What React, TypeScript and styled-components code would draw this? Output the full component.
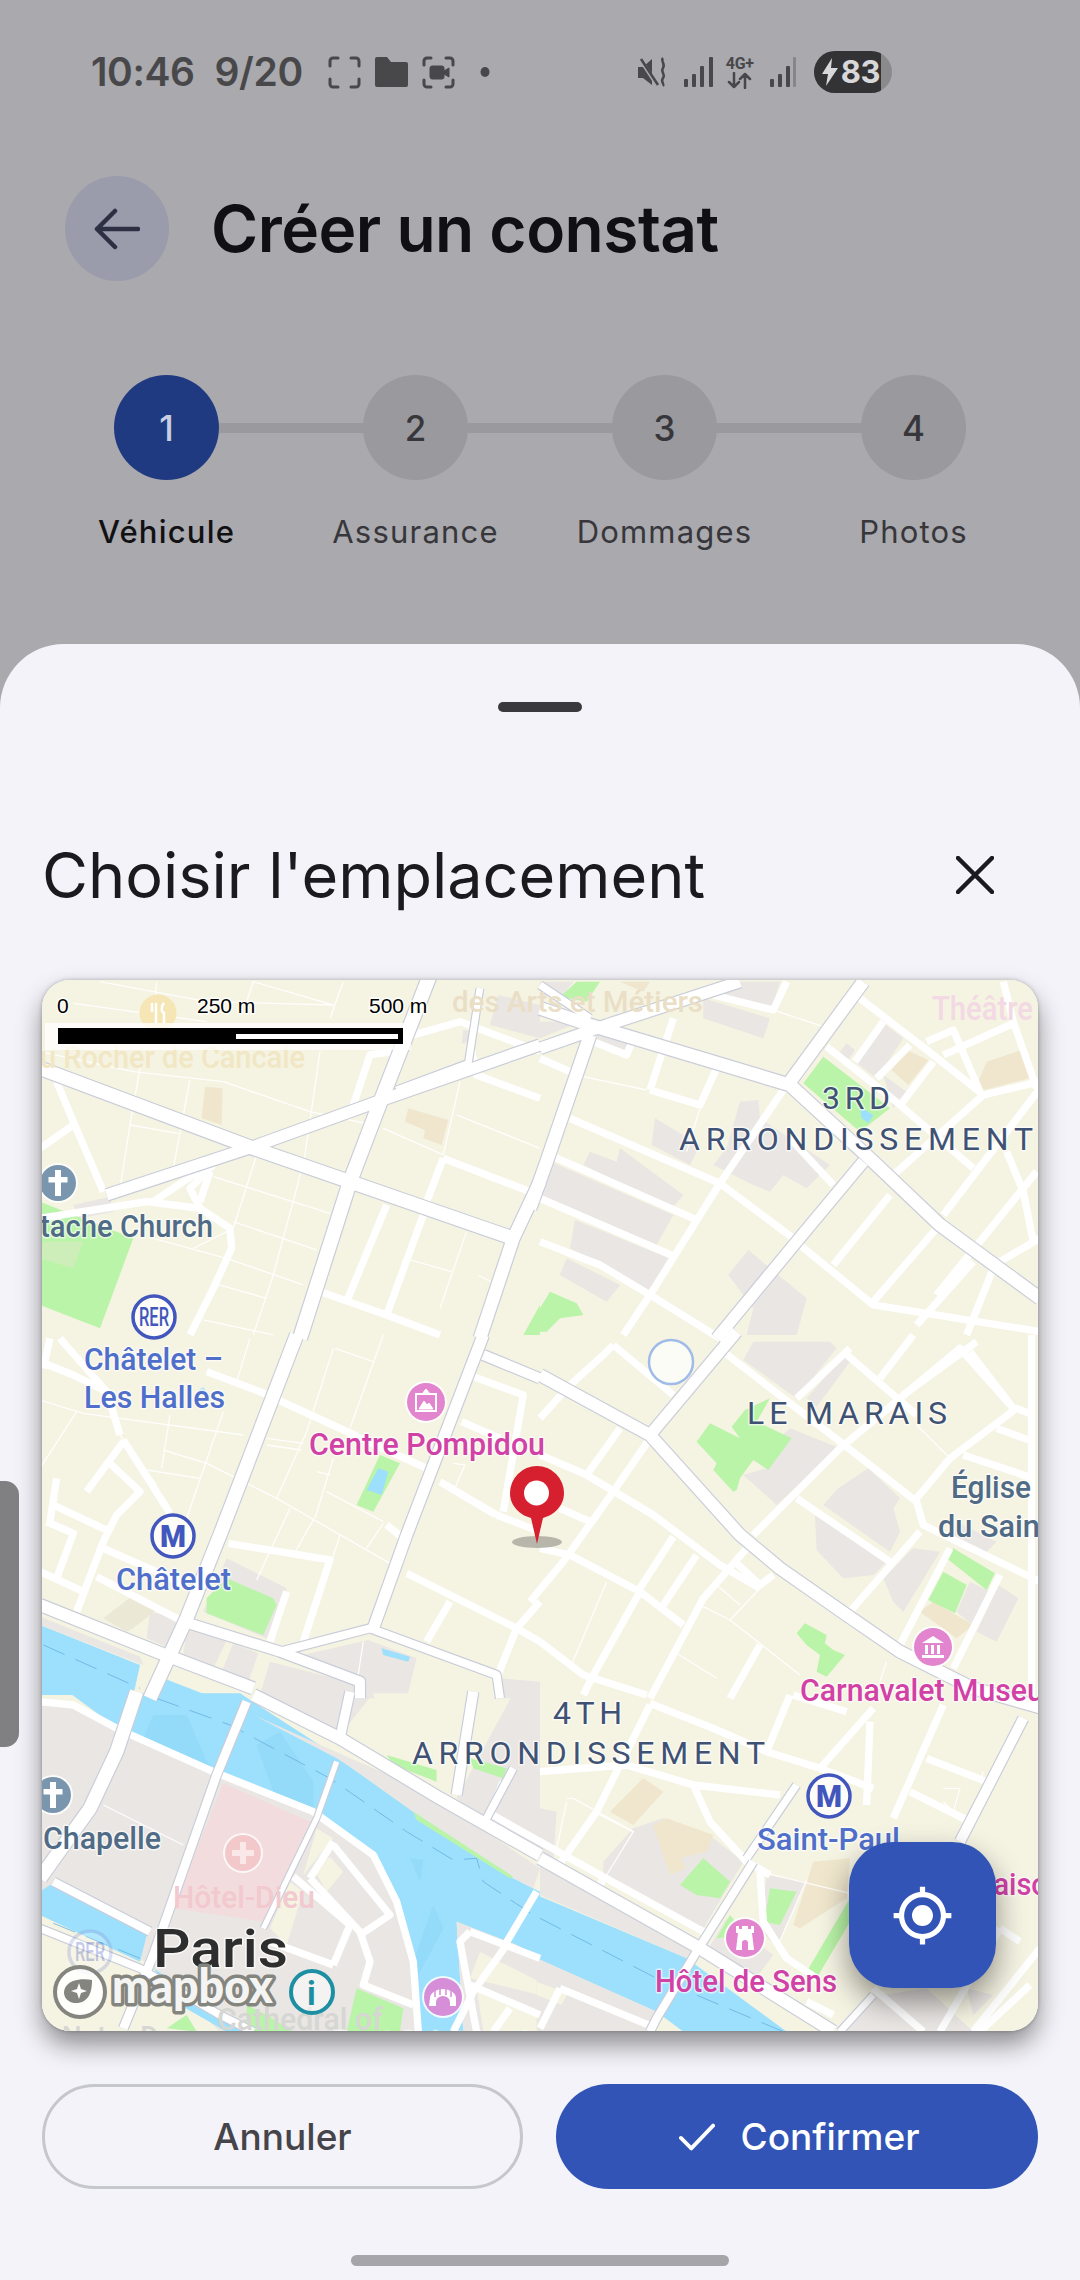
import React from "react";
import styled, { createGlobalStyle } from "styled-components";

const Global = createGlobalStyle`
  html, body { margin: 0; padding: 0; background: #a9a9ae; }
  * { box-sizing: border-box; }
  body { font-family: Inter, "Noto Sans", sans-serif; }
`;

const Screen = styled.div`
  position: relative; width: 1080px; height: 2280px; overflow: hidden;
  background: #a9a9ae; display: flex; flex-direction: column;
`;
const Backdrop = styled.div`height: 644px; flex: none; display: flex; flex-direction: column;`;
const StatusBar = styled.div`
  display: flex; align-items: center; height: 42px; margin-top: 51px; padding-left: 91px; color: #47474a;
`;
const StatusText = styled.span<{ $ml?: number }>`
  font: 600 39px/42px Inter, sans-serif; letter-spacing: -0.4px; margin-left: ${p => p.$ml ?? 0}px; color: #48484b;
`;
const StatusIcon = styled.svg<{ $ml: number }>`margin-left: ${p => p.$ml}px; flex: none; display: block;`;
const FourG = styled.div<{ $ml: number }>`
  margin-left: ${p => p.$ml}px; width: 32px; display: flex; flex-direction: column; align-items: center;
`;
const FourGText = styled.span`font: 700 16px/16px "Roboto", sans-serif; color: #48484b; letter-spacing: -.3px;`;
const Battery = styled.div`
  margin-left: 18px; width: 78px; height: 42px; border-radius: 21px; overflow: hidden;
  display: flex; align-items: center; background: #8a8a8d;
`;
const BatteryFill = styled.div`
  width: 67px; height: 42px; background: #333335; display: flex; align-items: center; padding-left: 8px; gap: 3px; flex: none;
`;
const BatteryText = styled.span`font: 700 31px/42px Inter, sans-serif; color: #d8d8da; letter-spacing: -.5px;`;

const AppBar = styled.div`display: flex; align-items: center; margin: 83px 0 0 65px; height: 105px;`;
const BackBtn = styled.div`
  width: 104px; height: 105px; border-radius: 50%; background: #9a9bab;
  display: flex; align-items: center; justify-content: center;
`;
const PageTitle = styled.h1`
  margin: 0 0 0 42px; font: 600 64px/70px Inter, sans-serif; color: #101014; letter-spacing: -.5px;
`;
const StepTrack = styled.div`display: flex; align-items: center; margin: 94px 114px 0 114px;`;
const StepDot = styled.div<{ $active?: boolean }>`
  width: 105px; height: 105px; flex: none; border-radius: 50%;
  background: ${p => (p.$active ? "#1f3a80" : "#99999e")};
  color: ${p => (p.$active ? "#c9cfe0" : "#37373b")};
  display: flex; align-items: center; justify-content: center;
  font: 500 35px/40px Inter, sans-serif;
`;
const StepLine = styled.div`flex: 1; height: 10px; background: #99999e;`;
const StepLabels = styled.div`
  display: grid; grid-template-columns: repeat(4, 249px); margin: 32px 0 0 42px;
`;
const StepLabel = styled.span<{ $active?: boolean }>`
  text-align: center; font: ${p => (p.$active ? 500 : 400)} 31px/40px Inter, sans-serif; letter-spacing: 1.2px;
  color: ${p => (p.$active ? "#111114" : "#37373b")};
`;

const Sheet = styled.div`
  flex: 1; background: #f3f3f9; border-radius: 64px 64px 0 0; padding: 58px 42px 0;
  display: flex; flex-direction: column;
`;
const Grip = styled.div`
  width: 84px; height: 10px; border-radius: 5px; background: #3a3a3e; align-self: center; flex: none;
`;
const SheetHeader = styled.div`
  margin-top: 113px; height: 100px; display: flex; align-items: center; justify-content: space-between; flex: none;
`;
const SheetTitle = styled.h2`
  margin: 0; font: 400 63px/100px Inter, sans-serif; color: #1b1b1f; letter-spacing: 0;
`;
const CloseBtn = styled.div`width: 100px; height: 100px; margin-right: 13px; display: flex; align-items: center; justify-content: center;`;
const MapFrame = styled.div`
  position: relative; margin-top: 55px; width: 996px; height: 1051px; flex: none; border-radius: 28px;
  box-shadow: 0 14px 26px rgba(0,0,0,.42), 0 0 4px rgba(0,0,0,.25);
`;
const MapClip = styled.div`
  width: 100%; height: 100%; border-radius: 28px; overflow: hidden; background: #f5f3e2;
`;
const MapArt = styled.svg`display: block; width: 996px; height: 1051px;`;
const MapLabel = styled.text<{ $size: number; $color: string; $weight?: number; $sp?: number; $halo?: string }>`
  font-family: Roboto, "Noto Sans", sans-serif;
  font-size: ${p => p.$size}px; font-weight: ${p => p.$weight ?? 500}; fill: ${p => p.$color};
  letter-spacing: ${p => p.$sp ?? 0}px;
  paint-order: stroke; stroke: ${p => p.$halo ?? "rgba(255,255,255,.65)"}; stroke-width: 3px; stroke-linejoin: round;
`;
const ScaleText = styled.text`
  font-family: "Liberation Sans", sans-serif; font-size: 21px; fill: #000;
  paint-order: stroke; stroke: rgba(255,255,255,.85); stroke-width: 3px;
`;
const LogoText = styled.text`
  font-family: Lato, "Noto Sans", sans-serif; font-weight: 900; font-size: 47px; fill: #f4f4f2;
  paint-order: stroke; stroke: #85857f; stroke-width: 7px; stroke-linejoin: round;
`;
const Fab = styled.button`
  position: absolute; left: 807px; top: 862px; width: 147px; height: 146px; border: 0; border-radius: 44px;
  background: #3154b6; box-shadow: 0 14px 30px rgba(0,0,0,.42);
  display: flex; align-items: center; justify-content: center; padding: 0;
`;
const Actions = styled.div`display: grid; grid-template-columns: 481px 482px; gap: 33px; margin-top: 53px; flex: none;`;
const OutlineBtn = styled.button`
  height: 105px; border-radius: 53px; border: 3.5px solid #c6c6cd; background: transparent;
  font: 500 37px/40px Inter, sans-serif; color: #44444a;
`;
const SolidBtn = styled.button`
  height: 105px; border-radius: 53px; border: 0; background: #3154b6; color: #fff;
  font: 500 37px/40px Inter, sans-serif; display: flex; align-items: center; justify-content: center; gap: 26px; padding-left: 10px;
`;
const HomeBar = styled.div`
  width: 378px; height: 11px; border-radius: 6px; background: #a5a5aa; margin-top: 66px; align-self: center; flex: none;
`;
const SideTab = styled.div`
  position: absolute; left: 0; top: 1481px; width: 19px; height: 266px; background: #808082; border-radius: 0 14px 14px 0;
`;

type Quad = { at: [number, number]; fills: [string, string][]; thin: string[]; mid: string[]; major: [string, number][]; };
const G = "#e9e6e3", T = "#efe6cd", GR = "#b9f4a8", B = "#9ce0fd", BD = "#94daf9", C = "#f5f3e2";

const quads: Quad[] = [
  { at: [40, 975],
    fills: [
      ["0,680 100,720 280,790 180,1060 0,990", GR], ["10,800 130,800 100,880 0,850", "#cdeeb9"],
      ["100,690 210,665 220,710 120,730", G], ["495,335 548,340 545,450 485,430", T],
      ["1105,400 1225,435 1205,510 1150,490 1155,465 1095,440", T], ["1375,60 1500,90 1500,190 1350,150", G],
      ["1270,165 1305,170 1295,205 1265,205", G], ["1450,1080 1500,990 1500,1080", GR],
    ],
    thin: ["180,20 500,80 880,90", "100,85 500,140", "640,20 880,90", "910,20 870,130", "350,20 340,130", "640,20 620,80",
      "0,230 280,290 550,320 810,410 1000,450", "840,230 795,540 770,640 700,900 640,1080", "300,280 270,450 240,640", "450,315 400,580",
      "270,450 415,475", "1260,320 1210,540", "1030,460 1210,540", "1250,420 1500,520", "650,540 580,760 460,820", "520,605 870,715",
      "580,740 830,825", "340,790 560,850 790,930", "520,925 680,970", "490,1035 700,1080", "1280,770 1200,1000", "1110,855 1235,890", "1315,900 1370,930"],
    mid: ["50,320 100,440 190,650", "100,450 0,520", "0,730 320,680 480,700 570,760 575,820 520,940 450,1080", "480,700 450,640 520,570", "340,680 490,580",
      "480,680 510,590", "1060,230 990,240 940,390", "1040,690 920,980", "1150,720 1040,1020", "840,950 1040,1020 1200,1080", "1210,550 1160,680",
      "1210,550 1470,650", "1500,370 1310,300 1290,200", "1120,180 1260,140 1500,230"],
    major: [["1170,0 1010,410 930,620 780,1090", 42], ["0,280 640,520 1420,790", 40], ["200,660 640,515 1040,370 1500,210", 34], ["1320,40 1285,265 1070,345", 20], ["1500,620 1420,790 1320,1090", 38]],
  },
  { at: [540, 975],
    fills: [
      ["0,20 100,20 60,70 0,60", G], ["0,140 120,140 0,190", G], ["170,170 290,190 270,230 240,220 170,200", G], ["490,70 690,130 670,190 490,130", G],
      ["530,20 720,20 695,100 530,60", G], ["1025,140 1090,190 1010,310 945,260", G], ["920,205 945,225 925,255 900,230", G],
      ["1100,225 1165,255 1105,330 1055,285", T], ["1030,300 1100,350 1060,400", G], ["1340,260 1445,225 1470,310 1330,345 1315,320", T],
      ["20,555 400,720 350,810 5,660", G], ["240,520 430,660 395,700 130,570 150,530 230,560", G], ["105,735 400,855 330,950 90,820", G], ["80,850 240,930 200,980 60,900", G],
      ["345,430 480,510 450,570 335,510", G], ["600,380 655,375 660,430 870,570 800,640 730,600 690,650 640,630 520,570 560,520", G], ["625,825 690,880 800,970 770,1080 620,1080 640,1000 565,900", G],
      ["60,65 110,20 180,20 140,80", GR], ["850,245 1050,400 960,470 790,325", GR], ["960,395 1000,420 985,445 965,430", B], ["30,950 110,985 130,1020 60,1030 20,1070 0,1070 0,1000", GR], ["240,20 330,20 310,50", T],
    ],
    thin: ["130,305 320,345", "700,105 850,155", "480,400 440,530", "1190,255 1320,360", "1260,200 1310,340"],
    mid: ["520,60 700,105 740,20", "330,345 480,390 530,280", "330,345 400,130", "160,200 260,240 280,190", "0,250 90,290", "90,430 540,625 760,790", "40,545 470,735", "0,670 405,845",
      "0,800 180,870 330,960 540,1090", "540,625 330,960 250,1080", "740,330 540,625", "960,70 1180,240 1330,360", "860,215 1080,390 1300,580", "1030,140 945,260", "1110,210 1010,310", "1180,260 1085,385",
      "1160,200 1240,165 1320,350", "1210,240 1420,145", "1390,20 1420,140 1490,340", "1330,360 1500,320", "1330,360 1060,600", "1500,340 1210,720", "1400,530 1450,650 1480,800", "1490,590 1190,960",
      "780,810 1000,990 1500,1070", "1050,660 880,870", "1190,760 1000,980", "1300,860 1130,1050", "1360,880 1280,1080", "1380,860 1500,790", "750,490 880,630"],
    major: [["0,100 150,150 750,330 1000,560 1200,750 1500,970", 38], ["970,20 750,320", 38], ["970,560 770,800 530,1090", 34], ["0,220 200,150 600,20", 34], ["150,180 20,560 -30,700", 38], ["0,30 150,130", 22]],
  },
  { at: [40, 1335],
    fills: [
      ["0,870 300,990 280,1080 0,1080", B], ["370,1030 500,1080 350,1080", B], ["330,830 420,850 380,935 320,910", G], ["440,880 560,915 520,1000 430,960", G], ["580,925 655,955 625,1040 545,1010", G],
      ["690,980 960,1050 950,1080 660,1080", G], ["0,845 300,965 310,990 0,870", G], ["790,960 985,915 1130,970 1100,1090 950,1090", G], ["1380,1030 1500,1040 1500,1090 1370,1090", G], ["560,670 740,760 680,910 490,830", G],
      ["560,730 700,790 710,810 670,900 500,835 500,790", GR], ["190,850 280,780 355,820 280,880 260,890", "#ebe9d6"], ["950,510 1020,360 1080,385 1000,530", GR], ["980,465 1015,400 1045,410 1025,480", B],
      ["1025,940 1110,965 1105,980 1030,960", B], ["470,170 490,155 510,185", "#bfe6f5"],
    ],
    thin: ["0,195 130,235 610,300", "680,310 790,325", "680,330 785,345", "370,345 500,385 710,490 1050,685", "240,300 350,450", "320,405 480,430", "390,240 365,400", "550,230 440,550", "630,10 590,140", "880,40 800,290 710,490",
      "1030,0 930,280", "885,40 1000,80", "750,520 650,735", "820,555 760,660", "900,600 800,910", "860,470 1030,560", "830,410 870,420", "880,370 825,550", "1030,565 980,640", "1200,450 1350,540", "1240,385 1275,390 1240,470", "0,400 110,230", "970,920 950,1050"],
    mid: ["0,80 100,120 220,180", "500,110 660,170 900,280 1160,400", "250,315 390,535", "250,320 140,470", "210,385 300,470 230,540 190,620 110,830", "50,430 30,560", "40,510 210,590", "20,560 100,595 50,730", "0,710 130,770",
      "190,640 440,750", "170,725 430,860", "565,625 870,675 790,920", "740,770 690,920", "1040,570 1090,610", "1100,715 1430,880 1500,920", "1230,800 1160,920", "1265,260 1380,310", "1300,125 1450,180 1390,530", "1200,440 1370,540", "1370,540 1500,590", "1500,800 1430,880 1370,1030", "30,10 10,100", "60,10 200,170 240,300"],
    major: [["770,0 540,600 440,850 330,1090", 40], ["1330,0 1100,600 1000,880", 34], ["1330,60 1500,130", 30], ["0,810 350,950 640,1060", 36], ["430,860 720,950 960,1040 960,1090", 30], ["720,950 990,880 1370,1020 1380,1090", 24]],
  },
  { at: [540, 1335],
    fills: [
      ["640,20 870,20 890,40 770,190 610,75", G], ["750,280 900,340 710,510 610,420 680,400 640,375", G], ["850,510 895,460 985,400 1080,490 1060,520 1080,590 1050,650", G], ["830,645 825,540 1040,680 1000,720 910,730", G],
      ["1030,730 1120,640 1200,650 1090,830 1060,800", G], ["1250,560 1370,620 1330,660 1240,610", G], ["1140,830 1180,800 1300,870 1250,910", T], ["1250,830 1290,740 1350,770 1310,880", G], ["1310,890 1375,750 1435,790 1370,920", G], ["800,190 915,60 930,80 830,215", G],
      ["470,320 510,265 600,310 575,275 615,225 690,190 650,260 755,310 685,405 640,375 600,430 590,465 580,470 520,405 530,385", GR],
      ["1220,670 1240,640 1365,715 1340,765", GR], ["1165,795 1210,710 1280,750 1245,835", GR], ["770,895 795,865 860,900 855,925 880,945 915,960 860,1025 830,1010 840,960 800,930", GR],
    ],
    thin: ["530,750 600,810", "570,855 660,760", "490,815 570,855 780,1020", "410,955 530,1030", "200,740 90,1000", "1230,370 1130,490", "1130,270 1230,370", "1040,980 1020,1040"],
    mid: ["220,30 400,180", "220,30 190,60 90,150 0,250", "0,360 140,420 340,540 540,690 660,760", "240,280 140,420", "330,310 220,470 70,680 -30,800", "0,640 90,660 300,770 430,870", "400,605 300,760", "470,660 370,810", "620,640 490,790 330,1090", "585,680 660,750 700,720",
      "300,770 160,1020 130,1080", "0,920 130,1020 320,1080", "660,930 570,1090", "640,600 900,340 1260,40 1420,220", "770,190 930,40", "910,50 1130,240", "550,50 900,320 1130,500 1150,570 1500,740", "770,490 1050,680", "930,830 1140,590", "1080,930 1230,640", "1240,1000 1380,720",
      "1020,130 1120,0", "1090,180 1310,20", "1230,370 1430,220 1480,240", "1290,50 1420,220", "1370,280 1480,320", "1270,360 1480,430", "1475,0 1475,1090", "60,520 150,560", "1130,490 1230,370"],
    major: [["590,-10 330,300", 34], ["0,120 330,300 600,600 720,700 920,840 1080,950 1300,1060 1510,1120", 36]],
  },
  { at: [40, 1695],
    fills: [
      ["0,30 100,30 240,105 520,230 820,350 1000,480 1070,620 1120,800 1140,1010 540,1010 330,810 0,620", G],
      ["90,-5 600,-5 900,190 930,215 1120,350 1420,550 1500,590 1500,790 1430,750 1250,680 1270,1010 1145,1010 1120,800 1070,620 1000,480 820,350 520,230 240,105", B],
      ["310,130 340,60 440,60 500,200 520,220", BD], ["650,150 720,110 820,260 820,340 700,290", BD], ["1120,800 1180,630 1210,700 1130,850", BD], ["1110,490 1150,495 1140,560", BD],
      ["0,590 30,570 320,720 300,800 0,660", B], ["340,820 550,960 640,1010 560,1010 420,930", B],
      ["640,-5 1000,-5 900,120", G], ["1000,-5 1300,-5 1200,260 1040,180", C], ["1250,310 1420,-5 1500,-5 1500,480 1330,380", G], ["640,60 890,190 930,215 1120,350 1420,550 1480,580 1500,520 1160,290 930,190", G],
      ["550,265 810,380 670,680 400,640", "#f3dcdd"], ["820,520 870,485 910,530 860,590", C], ["830,400 880,430 790,540", C], ["750,560 790,590 740,750 690,700", C],
      ["0,740 300,850 230,1010 0,1010", C], ["380,1000 440,960 470,1010", GR], ["620,930 680,960 760,1010 620,1010", GR], ["950,880 1090,940 1080,1010 920,1010", GR],
      ["1250,680 1430,750 1500,790 1500,1010 1270,1010", G], ["1320,770 1500,860 1500,900 1290,850", C], ["1310,880 1500,960 1500,1010 1330,1010", C],
      ["1120,350 1420,545 1410,550 1130,375", GR], ["1040,180 1190,225 1190,260 1060,210", GR], ["1290,190 1400,220 1390,250 1300,220", GR],
    ],
    thin: ["190,330 430,450"],
    mid: ["0,20 100,30 240,105 520,230 820,350 1000,480 1070,620 1120,800 1135,1010", "880,440 810,550", "810,550 960,710 990,800 970,870 1120,930", "880,450 1050,660 960,720", "760,545 930,690 880,810", "690,740 880,810",
      "1290,710 1500,790", "1290,710 1260,740 1310,1010", "1400,750 1300,890 1240,1010", "1290,870 1500,960", "1340,350 1500,440", "1390,260 1340,380", "1410,940 1360,1010", "1490,590 1395,750"],
    major: [["290,-10 230,170 150,340 0,550", 40], ["640,0 900,130 1200,310 1500,480", 36], ["620,20 530,240 340,780 250,1000", 26], ["930,-10 900,130", 28], ["890,200 830,370 670,700", 16], ["1300,-10 1250,300", 30], ["1420,220 1340,370", 22], ["40,560 330,710", 24], ["0,700 300,820 540,960 640,1010", 22]],
  },
  { at: [540, 1695],
    fills: [
      ["0,510 480,740 440,790 0,600", G], ["0,340 50,350 40,500 0,480", G], ["190,500 280,400 370,370 520,430 610,500 490,700 190,550", G], ["210,350 310,250 370,290 280,390", T], ["340,390 380,370 520,420 500,470 420,490 440,520 390,540", T],
      ["820,500 930,490 920,610 780,700 760,690", T], ["680,540 800,560 710,760 660,700", G], ["500,770 560,670 700,780 640,860", G],
      ["420,570 490,490 570,560 540,610 470,600", GR], ["680,640 690,580 770,590 720,690 670,680", GR], ["530,730 570,660 620,720", GR], ["800,830 930,610 930,680 830,850", GR],
      ["-10,600 440,790 740,1010 430,1010 350,950 -10,790", B], ["-10,790 350,950 330,1010 -10,1010", G], ["-10,860 110,905 90,940 -10,900", C], ["60,940 100,860 350,960 330,1010 100,1010", G], ["910,1010 1010,880 1130,1010", G], ["1030,900 1160,880 1300,1010 1060,1010", G], ["1280,880 1360,900 1300,960", G],
    ],
    thin: ["80,320 50,460", "80,310 100,310 280,410 200,540", "160,350 280,410", "680,535 930,595", "800,555 710,760", "1210,280 1260,280 1240,350 1210,320", "1330,230 1320,260", "0,430 190,550"],
    mid: ["0,230 260,210 460,270 720,300", "460,270 510,380 620,500 690,540", "680,170 840,220 1000,280", "330,25 520,100 680,170", "330,30 280,130 170,350 50,520", "750,0 680,170", "1000,40 840,220", "920,50 760,0", "990,80 980,330", "1210,30 1060,370",
      "1160,190 1340,260", "1110,290 1290,380", "660,530 670,680 740,790 830,850", "0,440 180,540 490,710", "190,550 170,590", "60,880 350,1000", "60,880 0,1000", "800,920 880,960", "1000,880 1150,1010", "1300,1010 1500,760", "1380,700 1440,740", "1200,1010 1380,700", "1320,1010 1470,870"],
    major: [["0,490 480,760 880,1010", 36], ["620,490 770,270", 22], ["640,500 470,770 350,970 330,1010", 24], ["1450,70 1260,440", 30], ["1000,900 900,1010", 20]],
  },
];

const DISTRICT = "#3f5274";
const labels: { t: string; x: number; y: number; s: number; c: string; len?: number; w?: number; halo?: string; spaced?: boolean }[] = [
  { t: "des Arts et Métiers", x: 452, y: 1012, s: 30, c: "#eadfc6", len: 251, halo: "none" },
  { t: "Théâtre", x: 932, y: 1020, s: 33, c: "#f3d9e4", len: 101, halo: "none" },
  { t: "u Rocher de Cancale", x: 40, y: 1068, s: 31, c: "#f2e7c4", len: 265, halo: "none" },
  { t: "3RD", x: 822, y: 1109, s: 32, c: DISTRICT, len: 68, w: 400, spaced: true },
  { t: "ARRONDISSEMENT", x: 679, y: 1150, s: 32, c: DISTRICT, len: 354, w: 400, spaced: true },
  { t: "tache Church", x: 40, y: 1237, s: 31, c: "#4f6b85", len: 173 },
  { t: "Châtelet –", x: 84, y: 1370, s: 31, c: "#4f6fcb", len: 139 },
  { t: "Les Halles", x: 84, y: 1408, s: 31, c: "#4f6fcb", len: 141 },
  { t: "Centre Pompidou", x: 309, y: 1455, s: 31, c: "#d141a6", len: 236 },
  { t: "Châtelet", x: 116, y: 1590, s: 31, c: "#4f6fcb", len: 115 },
  { t: "LE MARAIS", x: 747, y: 1424, s: 32, c: DISTRICT, len: 200, w: 400, spaced: true },
  { t: "Église", x: 951, y: 1498, s: 31, c: "#4f6b85", len: 80 },
  { t: "du Saint", x: 938, y: 1537, s: 31, c: "#4f6b85", len: 112 },
  { t: "Carnavalet Museum", x: 800, y: 1701, s: 31, c: "#d141a6", len: 270 },
  { t: "4TH", x: 553, y: 1724, s: 32, c: DISTRICT, len: 69, w: 400, spaced: true },
  { t: "ARRONDISSEMENT", x: 412, y: 1764, s: 32, c: DISTRICT, len: 353, w: 400, spaced: true },
  { t: "Saint-Paul", x: 757, y: 1850, s: 31, c: "#4f6fcb", len: 143 },
  { t: "Chapelle", x: 43, y: 1849, s: 31, c: "#4f6b85", len: 118 },
  { t: "Hôtel-Dieu", x: 173, y: 1908, s: 31, c: "#f2c9cf", len: 142, halo: "none" },
  { t: "Paris", x: 153, y: 1967, s: 54, c: "#2e2e2e", len: 135 },
  { t: "Hôtel de Sens", x: 655, y: 1992, s: 31, c: "#d141a6", len: 182 },
  { t: "Maison", x: 968, y: 1895, s: 31, c: "#d141a6", len: 96 },
  { t: "Cathedral of", x: 217, y: 2030, s: 31, c: "#d6d6d2", len: 166, halo: "none" },
  { t: "Notre-Dame", x: 62, y: 2048, s: 31, c: "#d6d6d2", len: 150, halo: "none" },
  { t: "Pont Saint-Louis", x: 333, y: 2053, s: 31, c: "#d141a6", len: 210 },
];

const Poi = ({ x, y, r, fill, o = 1, children }: { x: number; y: number; r: number; fill: string; o?: number; children?: React.ReactNode }) => (
  <g transform={`translate(${x} ${y})`} opacity={o}>
    <circle r={r + 2} fill="#fff" opacity={0.85} />
    <circle r={r} fill={fill} />
    {children}
  </g>
);
const Cross = () => <path d="M-3-13h6v7h6.5v5.5H3V13h-6V-.5h-6.5V-6H-3z" fill="#fff" />;

const Transit = ({ x, y, text, o = 1 }: { x: number; y: number; text: string; o?: number }) => (
  <g transform={`translate(${x} ${y})`} opacity={o}>
    <circle r={21} fill="#fff" fillOpacity={0.75} stroke={o < 1 ? "#8e9ad8" : "#4257bd"} strokeWidth={3.5} />
    {text === "M"
      ? <MapLabel x={-13} y={11} $size={31} $weight={900} $color="#4257bd" $halo="none" textLength={26} lengthAdjust="spacingAndGlyphs">M</MapLabel>
      : <MapLabel x={-15} y={9} $size={25} $weight={500} $color="#4257bd" $halo="none" textLength={30} lengthAdjust="spacingAndGlyphs">{text}</MapLabel>}
  </g>
);

const MapDrawing = () => (
  <MapArt viewBox="42 980 996 1051">
    <rect x="42" y="980" width="996" height="1051" fill="#f5f3e2" />
    {quads.map((q, i) => (
      <g key={i} transform={`translate(${q.at[0]} ${q.at[1]}) scale(.3333)`}>
        {q.fills.map(([pts, c], j) => <polygon key={j} points={pts} fill={c} />)}
      </g>
    ))}
    <g transform="translate(40 1695) scale(.3333)" fill="none" stroke="#6ab2e0" strokeWidth="2.5">
      <polyline points="350,10 570,90 700,160 870,250 1100,410 1240,495 1310,490 1330,560 1480,660" strokeDasharray="70 35" />
      <polyline points="40,685 300,790" strokeDasharray="70 35" />
    </g>
    <g transform="translate(40 1335) scale(.3333)" fill="none" stroke="#6ab2e0" strokeWidth="2.5">
      <polyline points="10,930 300,1060" strokeDasharray="70 35" />
    </g>
    <g transform="translate(540 1695) scale(.3333)" fill="none" stroke="#6ab2e0" strokeWidth="2.5">
      <polyline points="0,670 350,850 730,1010" strokeDasharray="70 35" />
    </g>
    {quads.map((q, i) => (
      <g key={i} transform={`translate(${q.at[0]} ${q.at[1]}) scale(.3333)`} fill="none" stroke="#fff" strokeLinejoin="round">
        {q.thin.map((pts, j) => <polyline key={j} points={pts} strokeWidth={4} opacity={0.9} />)}
        {q.mid.map((pts, j) => <polyline key={j} points={pts} strokeWidth={22} />)}
      </g>
    ))}
    {quads.map((q, i) => (
      <g key={i} transform={`translate(${q.at[0]} ${q.at[1]}) scale(.3333)`} fill="none" strokeLinejoin="round">
        {q.major.map(([pts, w], j) => <polyline key={j} points={pts} stroke="#c9cdd8" strokeWidth={w + 7} />)}
      </g>
    ))}
    {quads.map((q, i) => (
      <g key={i} transform={`translate(${q.at[0]} ${q.at[1]}) scale(.3333)`} fill="none" stroke="#fff" strokeLinejoin="round">
        {q.major.map(([pts, w], j) => <polyline key={j} points={pts} strokeWidth={w} />)}
      </g>
    ))}

    <g transform="translate(158 1013)">
      <circle r="18.5" fill="#f6e6b5" />
      <path d="M-6-10v9M-2-10v20M6-10c-3 3-3 9 0 10v10" stroke="#fff" strokeWidth="2.5" fill="none" />
    </g>
    <circle cx="671" cy="1362" r="22" fill="#fff" fillOpacity=".7" stroke="#9fbce8" strokeWidth="2.5" />

    {labels.map(l => (
      <MapLabel key={l.t + l.x} x={l.x} y={l.y} $size={l.s} $color={l.c} $weight={l.w} $halo={l.halo} textLength={l.len} lengthAdjust={l.spaced ? "spacing" : "spacingAndGlyphs"}>{l.t}</MapLabel>
    ))}

    <Poi x={58} y={1183} r={18} fill="#7a96ae"><Cross /></Poi>
    <Poi x={53} y={1795} r={18} fill="#7a96ae"><Cross /></Poi>
    <Poi x={243} y={1853} r={18} fill="#f3c6ca" o={0.9}><path d="M-3-11h6v8h8v6H3v8h-6V3h-8v-6h8z" fill="#fbe9ea" /></Poi>
    <Poi x={426} y={1402} r={19} fill="#e285ce">
      <rect x="-10" y="-8" width="20" height="17" fill="none" stroke="#fff" strokeWidth="2" />
      <path d="M-7 7l5-8 3 4 2-2 4 6zM-4-8L0-13l4 5" fill="#fff" stroke="#fff" strokeWidth="1" />
    </Poi>
    <Poi x={933} y={1647} r={19} fill="#e285ce">
      <path d="M-11-4L0-11 11-4zM-11 8h22v3h-22zM-8-2h3v9h-3zM-2-2h3v9h-3zM4-2h3v9H4z" fill="#fff" />
    </Poi>
    <Poi x={745} y={1938} r={19} fill="#e285ce">
      <path d="M-9-12h3v3h3v-3h6v3h3v-3h3v7H-9zM-7-5H7L9 12H3V5a3 3 0 0 0-6 0v7h-6z" fill="#fff" />
    </Poi>
    <Poi x={443} y={1997} r={19} fill="#d68ed8">
      <path d="M-13 1a13 9 0 0 1 26 0v8H7V5a7 6 0 0 0-14 0v4h-7z" fill="#fff" />
      <path d="M-8-6v6M-3-8v6M3-8v6M8-6v6" stroke="#d68ed8" strokeWidth="1.5" />
    </Poi>

    <Transit x={154} y={1317} text="RER" />
    <Transit x={173} y={1536} text="M" />
    <Transit x={829} y={1796} text="M" />
    <Transit x={90} y={1952} text="RER" o={0.3} />

    <ellipse cx="537" cy="1542" rx="25" ry="6" fill="#b8b6ab" />
    <path d="M537 1466a27 27 0 0 1 27 27c0 13-10 22-21 25l-6 26-6-26c-11-3-21-12-21-25a27 27 0 0 1 27-27z" fill="#d6202f" />
    <circle cx="536.500" cy="1493" r="12.500" fill="#fff" />

    <rect x="45" y="1023" width="366" height="27" fill="#fff" fillOpacity=".75" />
    <rect x="58" y="1028" width="345" height="16" fill="#000" />
    <rect x="236" y="1034" width="162" height="5" fill="#fff" />
    <ScaleText x="57" y="1013">0</ScaleText>
    <ScaleText x="197" y="1013">250 m</ScaleText>
    <ScaleText x="369" y="1013">500 m</ScaleText>

    <circle cx="80" cy="1992" r="25" fill="#fff" fillOpacity=".85" stroke="#85857f" strokeWidth="4" />
    <path d="M92 1980c0 10-2 17-8 21-7 4-16 2-19-4-3-7 1-13 8-16 6-2 13-2 19-1z" fill="#85857f" />
    <path d="M79 1983l2 6 6 2-6 2-2 6-2-6-6-2 6-2z" fill="#fff" />
    <LogoText x="112" y="2003" textLength={161} lengthAdjust="spacingAndGlyphs">mapbox</LogoText>
    <circle cx="312" cy="1992" r="21" fill="#fff" fillOpacity=".5" stroke="#1d8fa3" strokeWidth="4" />
    <MapLabel x={307} y={2005} $size={33} $weight={700} $color="#1d8fa3" $halo="none">i</MapLabel>
  </MapArt>
);

export default function App() {
  return (
    <Screen>
      <Global />
      <Backdrop>
        <StatusBar>
          <StatusText>10:46</StatusText>
          <StatusText $ml={20}>9/20</StatusText>
          <StatusIcon $ml={25} width="33" height="33" viewBox="0 0 33 33" fill="none" stroke="#48484b" strokeWidth="3" strokeLinecap="round">
            <path d="M2 10V5a3 3 0 0 1 3-3h5M23 2h5a3 3 0 0 1 3 3v5M31 23v5a3 3 0 0 1-3 3h-5M10 31H5a3 3 0 0 1-3-3v-5" />
          </StatusIcon>
          <StatusIcon $ml={14} width="33" height="30" viewBox="0 0 33 30" fill="#48484b">
            <path d="M0 2a2 2 0 0 1 2-2h10l4 5h15a2 2 0 0 1 2 2v21a2 2 0 0 1-2 2H2a2 2 0 0 1-2-2z" />
          </StatusIcon>
          <StatusIcon $ml={14} width="33" height="33" viewBox="0 0 33 33" fill="none" stroke="#48484b" strokeWidth="3" strokeLinecap="round">
            <path d="M2 9V5a3 3 0 0 1 3-3h4M24 2h4a3 3 0 0 1 3 3v4M31 24v4a3 3 0 0 1-3 3h-4M9 31H5a3 3 0 0 1-3-3v-4" />
            <path d="M8 12a2 2 0 0 1 2-2h10a2 2 0 0 1 2 2v9a2 2 0 0 1-2 2H10a2 2 0 0 1-2-2zM22 15l5-3v9l-5-3z" fill="#48484b" strokeWidth="1" />
          </StatusIcon>
          <StatusIcon $ml={25} width="10" height="10" viewBox="0 0 10 10" fill="#48484b"><ellipse cx="5" cy="5" rx="4.500" ry="5" /></StatusIcon>
          <StatusIcon $ml={148} width="30" height="32" viewBox="0 0 30 32" fill="none" stroke="#48484b">
            <path d="M0 11h5l9-8v26l-9-7H0z" fill="#48484b" stroke="none" />
            <path d="M2 3l17 26" stroke="#a9a9ae" strokeWidth="4" />
            <path d="M3 3l17 26" strokeWidth="2.500" />
            <path d="M25 2c-3 3 3 6 0 10s3 6 0 10 2 6 0 8" strokeWidth="2.500" />
          </StatusIcon>
          <StatusIcon $ml={16} width="29" height="30" viewBox="0 0 29 30" fill="#48484b">
            <rect x="0" y="22" width="4" height="8" rx="1" /><rect x="8" y="17" width="4" height="13" rx="1" /><rect x="16" y="9" width="4" height="21" rx="1" /><rect x="25" y="0" width="4" height="30" rx="1" />
          </StatusIcon>
          <FourG $ml={11}>
            <FourGText>4G+</FourGText>
            <svg width="30" height="17" viewBox="0 0 30 17" fill="none" stroke="#48484b" strokeWidth="2.500" strokeLinecap="round" strokeLinejoin="round">
              <path d="M9 1v14M4 10l5 5 5-5M20 16V2M15 7l5-5 5 5" />
            </svg>
          </FourG>
          <StatusIcon $ml={14} width="26" height="30" viewBox="0 0 26 30">
            <g fill="#48484b"><rect x="0" y="22" width="4" height="8" rx="1" /><rect x="8" y="17" width="4" height="13" rx="1" /><rect x="16" y="9" width="4" height="21" rx="1" /></g>
            <rect x="23" y="0" width="3" height="30" rx="1" fill="#85858a" />
          </StatusIcon>
          <Battery>
            <BatteryFill>
              <svg width="16" height="28" viewBox="0 0 16 28" fill="#d8d8da"><path d="M10 0L0 16h6l-2 12L16 10H9z" /></svg>
              <BatteryText>83</BatteryText>
            </BatteryFill>
          </Battery>
        </StatusBar>
        <AppBar>
          <BackBtn>
            <svg width="46" height="42" viewBox="0 0 46 42" fill="none" stroke="#2c3042" strokeWidth="4.500" strokeLinecap="round" strokeLinejoin="round">
              <path d="M44 21H3M21 3L3 21l18 18" />
            </svg>
          </BackBtn>
          <PageTitle>Créer un constat</PageTitle>
        </AppBar>
        <StepTrack>
          <StepDot $active>1</StepDot><StepLine />
          <StepDot>2</StepDot><StepLine />
          <StepDot>3</StepDot><StepLine />
          <StepDot>4</StepDot>
        </StepTrack>
        <StepLabels>
          <StepLabel $active>Véhicule</StepLabel>
          <StepLabel>Assurance</StepLabel>
          <StepLabel>Dommages</StepLabel>
          <StepLabel>Photos</StepLabel>
        </StepLabels>
      </Backdrop>
      <Sheet>
        <Grip />
        <SheetHeader>
          <SheetTitle>Choisir l'emplacement</SheetTitle>
          <CloseBtn>
            <svg width="38" height="38" viewBox="0 0 38 38" stroke="#1b1b1f" strokeWidth="4.500" strokeLinecap="round"><path d="M2 2l34 34M36 2L2 36" /></svg>
          </CloseBtn>
        </SheetHeader>
        <MapFrame>
          <MapClip><MapDrawing /></MapClip>
          <Fab aria-label="Ma position">
            <svg width="63" height="63" viewBox="0 0 24 24" fill="#fff">
              <path d="M12 8c-2.210 0-4 1.790-4 4s1.790 4 4 4 4-1.790 4-4-1.790-4-4-4zm8.940 3c-.46-4.170-3.770-7.480-7.940-7.940V1h-2v2.060C6.830 3.520 3.520 6.830 3.060 11H1v2h2.060c.46 4.170 3.770 7.480 7.940 7.940V23h2v-2.060c4.170-.46 7.480-3.770 7.940-7.940H23v-2h-2.060zM12 19c-3.870 0-7-3.130-7-7s3.130-7 7-7 7 3.130 7 7-3.130 7-7 7z" />
            </svg>
          </Fab>
        </MapFrame>
        <Actions>
          <OutlineBtn>Annuler</OutlineBtn>
          <SolidBtn>
            <svg width="36" height="30" viewBox="0 0 38 30" fill="none" stroke="#fff" strokeWidth="4" strokeLinecap="round" strokeLinejoin="round"><path d="M2 16l11 11L36 3" /></svg>
            Confirmer
          </SolidBtn>
        </Actions>
        <HomeBar />
      </Sheet>
      <SideTab />
    </Screen>
  );
}
